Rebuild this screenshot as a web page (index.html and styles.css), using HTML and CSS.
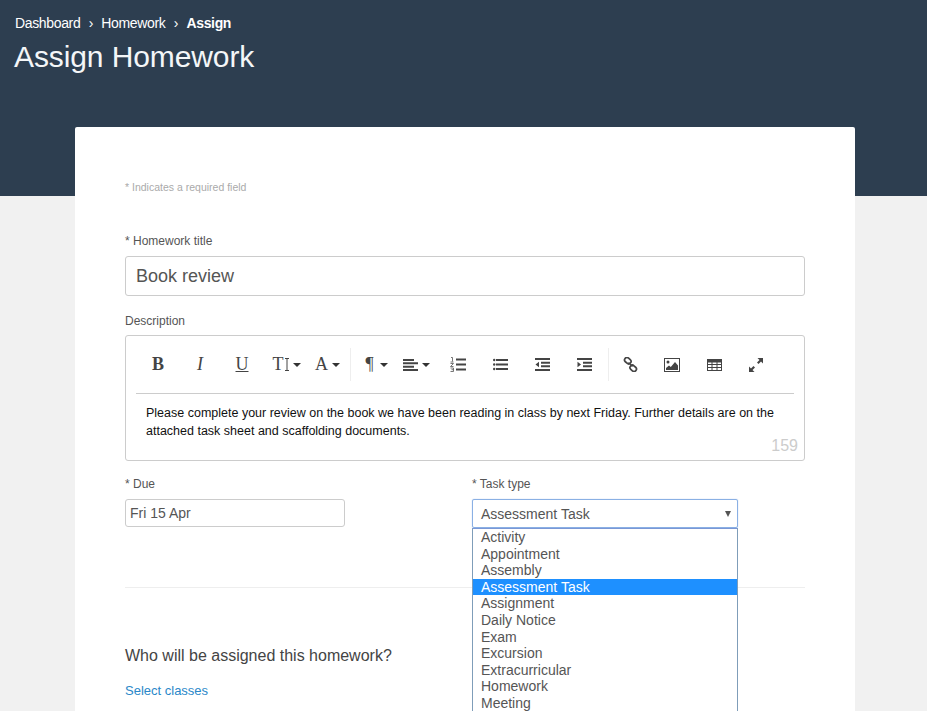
FILE: index.html
```html
<!DOCTYPE html>
<html lang="en">
<head>
<meta charset="utf-8">
<title>Assign Homework</title>
<link rel="stylesheet" href="styles.css">
</head>
<body>
<header class="banner">
  <nav class="crumbs"><a>Dashboard</a><span class="sep">›</span><a>Homework</a><span class="sep">›</span><b>Assign</b></nav>
  <h1>Assign Homework</h1>
</header>
<main class="card">
  <p class="required-note">* Indicates a required field</p>
  <label class="label title-label">* Homework title</label>
  <input class="title-input" type="text" value="Book review">
  <label class="label desc-label">Description</label>
  <section class="editor">
    <div class="toolbar">
      <div class="group">
        <button class="tool glyph bold">B</button>
        <button class="tool glyph italic">I</button>
        <button class="tool glyph under">U</button>
        <button class="tool glyph size">T<svg class="ibeam" width="4" height="13" viewBox="0 0 4 13"><path d="M0 .5h4M0 12.5h4M2 .5v12" stroke="#444" fill="none"/></svg><i class="caret"></i></button>
        <button class="tool glyph color">A<i class="caret"></i></button>
      </div>
      <div class="group">
        <button class="tool glyph para">¶<i class="caret"></i></button>
        <button class="tool align"><svg width="15" height="12" viewBox="0 0 15 12"><path d="M0 0h11v2H0zM0 3.300h15v2H0zM0 6.700h11v2H0zM0 10h15v2H0z" fill="#444"/></svg><i class="caret"></i></button>
        <button class="tool"><svg width="16" height="15" viewBox="0 0 16 15"><path d="M6 1.500h10v2H6zM6 6.500h10v2H6zM6 11.500h10v2H6z" fill="#444"/><path d="M1 .5h1.500v4M.5 5h3M.5 6.500h3l-3 3h3M.5 11h3v3.500h-3M1.500 12.700h2" stroke="#555" stroke-width=".8" fill="none"/></svg></button>
        <button class="tool"><svg width="15" height="13" viewBox="0 0 15 13"><path d="M3 1h12v2H3zM3 5.500h12v2H3zM3 10h12v2H3z" fill="#444"/><circle cx="1.200" cy="2" r="1.200" fill="#444"/><circle cx="1.200" cy="6.500" r="1.200" fill="#444"/><circle cx="1.200" cy="11" r="1.200" fill="#444"/></svg></button>
        <button class="tool"><svg width="15" height="13" viewBox="0 0 15 13"><path d="M0 0h15v2H0zM6 3.700h9v2H6zM6 7.300h9v2H6zM0 11h15v2H0zM4 3.700v5.600L.5 6.500z" fill="#444"/></svg></button>
        <button class="tool"><svg width="15" height="13" viewBox="0 0 15 13"><path d="M0 0h15v2H0zM6 3.700h9v2H6zM6 7.300h9v2H6zM0 11h15v2H0zM.5 3.700v5.600L4 6.500z" fill="#444"/></svg></button>
      </div>
      <div class="group">
        <button class="tool"><svg width="15" height="15" viewBox="0 0 15 15"><g fill="none" stroke="#444" stroke-width="1.700"><rect x="1.300" y="1.300" width="7" height="4.800" rx="2.400" transform="rotate(42 4.800 3.700)"/><rect x="6.700" y="8.900" width="7" height="4.800" rx="2.400" transform="rotate(42 10.200 11.300)"/></g><path d="M5.500 5.500l4 4" stroke="#444" stroke-width="1.400"/></svg></button>
        <button class="tool"><svg width="16" height="14" viewBox="0 0 16 14"><rect x=".5" y=".5" width="15" height="13" fill="none" stroke="#444"/><circle cx="4" cy="4" r="1.500" fill="#444"/><path d="M2 12V10l3-2.500 1.800 1.500L11 4l3 3.500V12z" fill="#444"/></svg></button>
        <button class="tool"><svg width="15" height="12" viewBox="0 0 15 12"><rect x=".5" y=".5" width="14" height="11" fill="none" stroke="#444"/><path d="M0 1h15v2.500H0z" fill="#444"/><path d="M5 1v10M10 1v10M1 5.500h13M1 8.500h13" stroke="#444" fill="none"/></svg></button>
        <button class="tool"><svg width="14" height="14" viewBox="0 0 14 14"><path d="M8.500 0H14v5.500l-2-2L9.500 6 8 4.500 10.500 2zM0 14V8.500l2 2L4.500 8 6 9.500 3.500 12l2 2z" fill="#444"/></svg></button>
      </div>
    </div>
    <div class="editor-body">Please complete your review on the book we have been reading in class by next Friday. Further details are on the attached task sheet and scaffolding documents.</div>
    <span class="counter">159</span>
  </section>
  <div class="columns">
    <div class="col-due">
      <label class="label">* Due</label>
      <input class="due-input" type="text" value="Fri 15 Apr">
    </div>
    <div class="col-type">
      <label class="label">* Task type</label>
      <div class="select">Assessment Task<i class="select-arrow"></i></div>
      <ul class="options">
        <li>Activity</li>
        <li>Appointment</li>
        <li>Assembly</li>
        <li class="selected">Assessment Task</li>
        <li>Assignment</li>
        <li>Daily Notice</li>
        <li>Exam</li>
        <li>Excursion</li>
        <li>Extracurricular</li>
        <li>Homework</li>
        <li>Meeting</li>
        <li>Other</li>
      </ul>
    </div>
  </div>
  <hr class="divider">
  <h2>Who will be assigned this homework?</h2>
  <a class="link">Select classes</a>
</main>
</body>
</html>
```
FILE: styles.css
```css
* { box-sizing: border-box; }
html, body { margin: 0; height: 711px; overflow: hidden; }
body { background: #f1f1f1; font-family: "Liberation Sans", Arial, sans-serif; color: #444; }

.banner { background: #2d3e50; height: 196px; padding: 15px 15px 0; color: #fff; }
.crumbs { display: flex; align-items: center; font-size: 14px; line-height: 17px; letter-spacing: -0.35px; }
.crumbs .sep { width: 21px; text-align: center; }
.crumbs b { font-weight: bold; }
h1 { margin: 7px 0 0 -1px; font-size: 30px; line-height: 36px; font-weight: 400; color: #f4f6f8; letter-spacing: -0.1px; }

.card { position: relative; width: 780px; height: 640px; margin: -69px 0 0 75px; padding: 50px; background: #fff; border-radius: 2px; }
.required-note { margin: 3px 0 0; font-size: 10.500px; line-height: 14px; font-weight: 400; color: #aaa; }
.label { display: block; font-size: 12px; line-height: 14px; color: #555; }
.title-label { margin-top: 40px; }
.title-input { display: block; width: 680px; height: 40px; margin-top: 8px; padding: 0 10px; border: 1px solid #ccc; border-radius: 3px; font: 18px "Liberation Sans", Arial, sans-serif; color: #555; }
.desc-label { margin-top: 18px; }

.editor { position: relative; height: 126px; margin-top: 7px; padding: 0 10px; border: 1px solid #ccc; border-radius: 3px; }
.toolbar { display: flex; height: 58px; padding: 12px 0 0 1px; border-bottom: 1px solid #ccc; }
.group { display: flex; height: 33px; }
.group + .group { border-left: 1px solid #eee; }
.tool { display: flex; align-items: center; justify-content: center; gap: 4px; width: 42px; height: 33px; padding: 0; border: 0; background: none; color: #444; }
.glyph { font-family: "Liberation Serif", serif; font-size: 18px; }
.bold { font-weight: bold; }
.italic { font-style: italic; }
.under { text-decoration: underline; }
.size { gap: 0; padding-left: 5px; }
.ibeam { margin: 0 4px 0 1px; }
.color { width: 45px; }
.para { padding-left: 9px; gap: 6px; }
.align { width: 44px; padding-left: 2px; }
.caret { display: block; width: 0; height: 0; border: 4px solid transparent; border-top-color: #333; border-bottom: 0; }
.group:nth-child(2) { width: 258px; padding-right: 0; }
.group:nth-child(3) { padding-left: 0; margin-left: 0; }

.editor-body { padding: 10px 10px 0; font-size: 12.500px; line-height: 18px; color: #111; }
.counter { position: absolute; right: 6px; bottom: 5px; font-size: 16px; line-height: 18px; color: #ccc; }

.columns { display: flex; margin-top: 16px; }
.col-due { width: 347px; }
.col-due .label, .col-type .label { margin-top: 0; }
.due-input { display: block; width: 220px; height: 28px; margin-top: 8px; padding: 0 4px; border: 1px solid #ccc; border-radius: 3px; font: 14px "Liberation Sans", Arial, sans-serif; color: #555; }
.col-type { position: relative; width: 266px; }
.select { display: flex; align-items: center; justify-content: space-between; height: 29px; margin-top: 8px; padding: 0 6px 0 8px; border: 1px solid #8ab0e4; border-radius: 2px; font-size: 14px; color: #555; box-shadow: 0 0 1px #8ab0e4; }
.select-arrow { display: block; width: 0; height: 0; border: 3.500px solid transparent; border-top: 6px solid #555; border-bottom: 0; }
.options { position: absolute; top: 51px; left: 0; width: 266px; margin: 0; padding: 0; list-style: none; background: #fff; border: 1px solid #7f9db9; border-top-color: #7a97d6; font-size: 14px; line-height: 16.600px; color: #555; z-index: 2; }
.options li { height: 16.600px; padding-left: 8px; }
.options .selected { background: #1e90ff; color: #fff; }

.divider { height: 1px; margin: 59px 0 0; border: 0; background: #eee; }
h2 { margin: 58px 0 0; font-size: 16px; line-height: 20px; font-weight: 400; color: #444; }
.link { display: block; margin-top: 17px; font-size: 13px; line-height: 16px; color: #2a88c9; }
```
